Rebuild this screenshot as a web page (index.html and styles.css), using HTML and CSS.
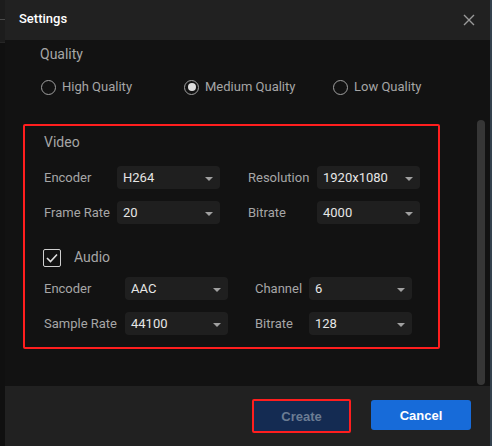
FILE: index.html
```html
<!DOCTYPE html>
<html lang="en">
<head>
<meta charset="utf-8">
<title>Settings</title>
<link rel="stylesheet" href="styles.css">
</head>
<body>
<div class="screen">
  <div class="side-strip">
    <div class="strip-top"></div>
  </div>
  <div class="dialog">
    <div class="header">
      <span class="title">Settings</span>
      <svg class="close" width="12" height="12" viewBox="0 0 12 12"><path d="M1 1 L11 11 M11 1 L1 11" stroke="#9a9a9a" stroke-width="1.4" fill="none"/></svg>
    </div>
    <div class="body">
      <div class="content">
        <div class="section-title quality-title">Quality</div>
        <div class="radios">
          <label class="radio r1"><span class="dot"></span>High Quality</label>
          <label class="radio r2"><span class="dot on"></span>Medium Quality</label>
          <label class="radio r3"><span class="dot"></span>Low Quality</label>
        </div>
        <div class="box">
          <div class="section-title">Video</div>
          <div class="row video first">
            <span class="lab l1">Encoder</span>
            <div class="select"><span>H264</span><i class="caret"></i></div>
            <span class="lab l2">Resolution</span>
            <div class="select"><span>1920x1080</span><i class="caret"></i></div>
          </div>
          <div class="row video">
            <span class="lab l1">Frame Rate</span>
            <div class="select"><span>20</span><i class="caret"></i></div>
            <span class="lab l2">Bitrate</span>
            <div class="select"><span>4000</span><i class="caret"></i></div>
          </div>
          <div class="audio-head">
            <span class="check"><svg width="12" height="10" viewBox="0 0 12 10"><path d="M1 5 L4.5 8.5 L11 1.5" stroke="#e0e0e0" stroke-width="1.6" fill="none"/></svg></span>
            <span class="section-title">Audio</span>
          </div>
          <div class="row audio first">
            <span class="lab l1">Encoder</span>
            <div class="select"><span>AAC</span><i class="caret"></i></div>
            <span class="lab l2">Channel</span>
            <div class="select"><span>6</span><i class="caret"></i></div>
          </div>
          <div class="row audio">
            <span class="lab l1">Sample Rate</span>
            <div class="select"><span>44100</span><i class="caret"></i></div>
            <span class="lab l2">Bitrate</span>
            <div class="select"><span>128</span><i class="caret"></i></div>
          </div>
        </div>
      </div>
      <div class="scrollbar"></div>
    </div>
    <div class="footer">
      <button class="btn create">Create</button>
      <button class="btn cancel">Cancel</button>
    </div>
  </div>
  <div class="edge"></div>
</div>
</body>
</html>
```

FILE: styles.css
```css
* { box-sizing: border-box; }
html, body { margin: 0; padding: 0; }
body {
  background: #121212;
  font-family: Roboto, "Liberation Sans", sans-serif;
  width: 492px;
  height: 446px;
  overflow: hidden;
}
.screen {
  display: flex;
  width: 492px;
  height: 446px;
}
.side-strip {
  width: 5px;
  background: #101010;
  display: flex;
  flex-direction: column;
}
.strip-top {
  height: 43px;
  background: #1c1c1c;
  border-bottom: 1px solid #262626;
  position: relative;
}
.strip-top::after {
  content: "";
  position: absolute;
  left: 0;
  right: 0;
  top: 19px;
  height: 1px;
  background: #4a4a4a;
}
.dialog {
  width: 485px;
  display: flex;
  flex-direction: column;
  background: #121212;
}
.edge {
  width: 2px;
  background: #34414e;
}
.header {
  height: 40px;
  background: #212121;
  display: flex;
  align-items: center;
  justify-content: space-between;
  padding: 0 15px 0 14px;
}
.title {
  color: #ffffff;
  font-size: 13px;
  font-weight: 500;
  margin-top: -3px;
}
.close { margin-top: -1px; }
.body {
  height: 346px;
  display: flex;
}
.content {
  flex: 1;
  padding-top: 6px;
}
.scrollbar {
  width: 8px;
  margin: 80px 5px 1px 0;
  background: #363636;
  border-radius: 4px;
}
.section-title {
  color: #a6a6a6;
  font-size: 14px;
  line-height: 16px;
}
.quality-title { margin-left: 35px; }
.radios {
  display: flex;
  margin: 17px 0 0 36px;
  height: 16px;
  align-items: center;
}
.radio {
  display: flex;
  align-items: center;
  color: #a6a6a6;
  font-size: 13px;
  line-height: 16px;
}
.r1 { width: 143px; }
.r2 { width: 149px; }
.dot {
  width: 15px;
  height: 15px;
  border: 1.5px solid #a0a0a0;
  border-radius: 50%;
  margin-right: 6px;
  display: flex;
  align-items: center;
  justify-content: center;
}
.dot.on::after {
  content: "";
  width: 8px;
  height: 8px;
  border-radius: 50%;
  background: #dcdcdc;
}
.box {
  margin: 29px 0 0 18px;
  width: 417px;
  height: 225px;
  border: 2px solid #ff1e1e;
  border-radius: 2px;
  padding: 8px 0 0 19px;
}
.row {
  display: flex;
  align-items: center;
  margin-top: 12px;
  height: 23px;
}
.row.first { margin-top: 16px; }
.row.audio.first { margin-top: 10px; }
.lab {
  color: #a6a6a6;
  font-size: 13px;
}
.video .l1 { width: 73px; }
.video .l2 { width: 69px; margin-left: 28px; }
.audio .l1 { width: 81px; }
.audio .l2 { width: 54px; margin-left: 27px; }
.select {
  width: 103px;
  height: 23px;
  background: #1f1f1f;
  border-radius: 4px;
  display: flex;
  align-items: center;
  justify-content: space-between;
  padding: 0 7px 0 6px;
  color: #e6e6e6;
  font-size: 13px;
}
.caret {
  width: 0;
  height: 0;
  border-left: 4.5px solid transparent;
  border-right: 4.5px solid transparent;
  border-top: 4px solid #a0a0a0;
  margin-top: 2px;
}
.audio-head {
  display: flex;
  align-items: center;
  margin-top: 25px;
  height: 18px;
}
.check {
  width: 18px;
  height: 18px;
  border: 1.5px solid #cfcfcf;
  border-radius: 2px;
  display: flex;
  align-items: center;
  justify-content: center;
  margin-left: -1px;
  margin-right: 13px;
}
.audio-head .section-title { margin-top: -3px; }
.footer {
  height: 60px;
  background: #212121;
  display: flex;
  align-items: center;
  justify-content: flex-end;
  padding: 0 19px 2px 0;
  gap: 20px;
}
.btn {
  font-family: "Liberation Sans", Arial, sans-serif;
  font-weight: bold;
  font-size: 13px;
  border: none;
  padding: 0;
}
.create {
  width: 99px;
  height: 34px;
  background: #142b52;
  color: #6b7c93;
  border: 2px solid #ff1e1e;
  border-radius: 2px;
  margin-top: 2px;
}
.cancel {
  width: 100px;
  height: 30px;
  background: #176bd9;
  color: #ffffff;
  border-radius: 3px;
}
```
